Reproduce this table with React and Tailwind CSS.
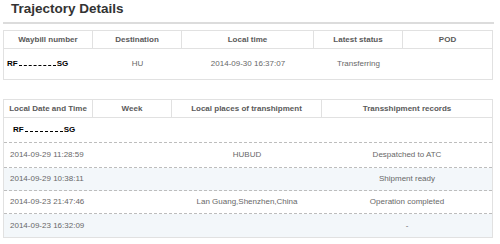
const summary = {
  heads: ["Waybill number", "Destination", "Local time", "Latest status", "POD"],
  dest: "HU",
  time: "2014-09-30 16:37:07",
  status: "Transferring",
};

const records = [
  { t: "2014-09-29 11:28:59", place: "HUBUD", rec: "Despatched to ATC", h: "h-[25px]" },
  { t: "2014-09-29 10:38:11", place: "", rec: "Shipment ready", h: "h-[23px]", alt: true },
  { t: "2014-09-23 21:47:46", place: "Lan Guang,Shenzhen,China", rec: "Operation completed", h: "h-[23px]" },
  { t: "2014-09-23 16:32:09", place: "", rec: "-", h: "h-[23px]", alt: true, last: true },
];

function Masked({ w }) {
  return (
    <span className="font-bold text-black">
      RF
      <span className={`inline-block ${w} mx-[1px] border-b border-dashed border-black align-baseline`} />
      SG
    </span>
  );
}

export default function App() {
  return (
    <div className="w-[500px] h-[244px] bg-white px-[3px] font-['Liberation_Sans',Arial,sans-serif] text-[8px] text-[#686868] overflow-hidden">
      <h1 className="pl-[8px] pt-[1px] h-[17px] leading-[16px] text-[13.5px] font-bold text-[#333]">Trajectory Details</h1>
      <div className="mt-[5px] w-[491px] border-t-2 border-[#dcdcdc]" />

      <div className="mt-[6px] w-[490px] border border-[#e1e1e1]">
        <div className="grid grid-cols-[89px_89px_132px_89px_1fr] h-[18px] border-b border-[#e1e1e1] font-bold text-[#5a5a5a]">
          {summary.heads.map((h, i) => (
            <div key={h} className={`flex items-center justify-center ${i < 4 ? "border-r border-[#e1e1e1]" : ""}`}>
              {h}
            </div>
          ))}
        </div>
        <div className="grid grid-cols-[89px_89px_132px_89px_1fr] h-[30px] items-center">
          <div className="pl-[3px]"><Masked w="w-[37px]" /></div>
          <div className="text-center">{summary.dest}</div>
          <div className="text-center">{summary.time}</div>
          <div className="text-center">{summary.status}</div>
          <div />
        </div>
      </div>

      <div className="mt-[19px] w-[490px] border border-[#e1e1e1]">
        <div className="grid grid-cols-[89px_79px_150px_1fr] h-[18px] border-b border-[#e1e1e1] font-bold text-[#5a5a5a]">
          {["Local Date and Time", "Week", "Local places of transhipment", "Transshipment records"].map((h, i) => (
            <div key={h} className={`flex items-center justify-center ${i < 3 ? "border-r border-[#e1e1e1]" : ""}`}>
              {h}
            </div>
          ))}
        </div>
        <div className="h-[25px] flex items-center pl-[9px] border-b border-dashed border-[#bdbdbd]">
          <Masked w="w-[38px]" />
        </div>
        {records.map((r) => (
          <div
            key={r.t}
            className={`grid grid-cols-[89px_79px_150px_1fr] items-center ${r.h} ${r.alt ? "bg-[#f3f7fa]" : ""} ${r.last ? "" : "border-b border-dashed border-[#bdbdbd]"}`}
          >
            <div className="pl-[6px]">{r.t}</div>
            <div />
            <div className="text-center">{r.place}</div>
            <div className="text-center">{r.rec}</div>
          </div>
        ))}
      </div>
    </div>
  );
}
